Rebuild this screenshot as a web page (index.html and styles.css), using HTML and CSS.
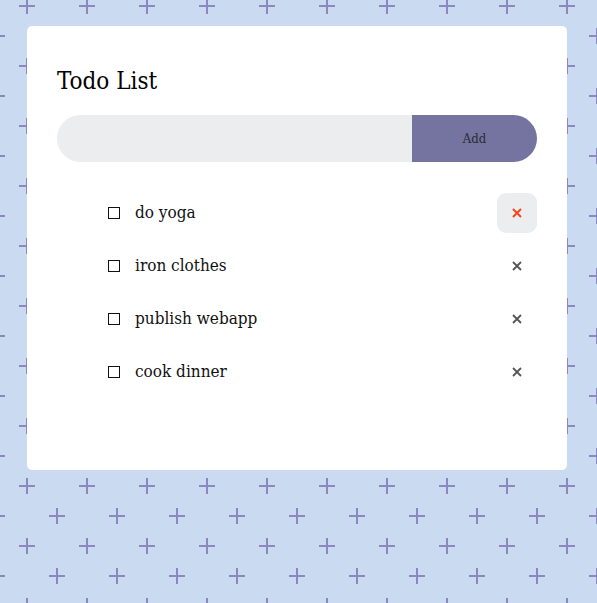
FILE: index.html
```html
<!DOCTYPE html>
<html lang="en">
<head>
<meta charset="utf-8">
<title>Todo List</title>
<link rel="stylesheet" href="styles.css">
</head>
<body>
<main class="card">
  <h1 class="title">Todo List</h1>
  <form class="add-form">
    <input class="add-input" type="text" aria-label="New todo">
    <button class="add-btn" type="button">Add</button>
  </form>
  <ul class="todo-list">
    <li class="todo">
      <span class="check"></span>
      <span class="todo-text">do yoga</span>
      <button class="del del-hover" type="button" aria-label="Delete"><svg viewBox="0 0 10 10" width="10" height="10"><path d="M1 1L9 9M9 1L1 9"/></svg></button>
    </li>
    <li class="todo">
      <span class="check"></span>
      <span class="todo-text">iron clothes</span>
      <button class="del" type="button" aria-label="Delete"><svg viewBox="0 0 10 10" width="10" height="10"><path d="M1 1L9 9M9 1L1 9"/></svg></button>
    </li>
    <li class="todo">
      <span class="check"></span>
      <span class="todo-text">publish webapp</span>
      <button class="del" type="button" aria-label="Delete"><svg viewBox="0 0 10 10" width="10" height="10"><path d="M1 1L9 9M9 1L1 9"/></svg></button>
    </li>
    <li class="todo">
      <span class="check"></span>
      <span class="todo-text">cook dinner</span>
      <button class="del" type="button" aria-label="Delete"><svg viewBox="0 0 10 10" width="10" height="10"><path d="M1 1L9 9M9 1L1 9"/></svg></button>
    </li>
  </ul>
</main>
</body>
</html>
```
FILE: styles.css
```css
html, body {
  margin: 0;
  padding: 0;
}
body {
  width: 597px;
  height: 603px;
  overflow: hidden;
  background-color: #c9daf1;
  background-image: url("data:image/svg+xml,%3Csvg xmlns='http://www.w3.org/2000/svg' width='60' height='60'%3E%3Cg fill='%238b88bf'%3E%3Crect x='7' y='14' width='16' height='2'/%3E%3Crect x='14' y='7' width='2' height='16'/%3E%3Crect x='37' y='44' width='16' height='2'/%3E%3Crect x='44' y='37' width='2' height='16'/%3E%3C/g%3E%3C/svg%3E");
  background-position: 12px -9px;
  font-family: "DejaVu Serif Condensed", "DejaVu Serif", "Liberation Serif", serif;
  color: #111;
}
.card {
  box-sizing: border-box;
  width: 540px;
  height: 444px;
  margin: 26px 0 0 27px;
  padding: 30px;
  background: #fff;
  border-radius: 5px;
  display: flex;
  flex-direction: column;
}
.title {
  margin: 10px 0 19px;
  font-size: 24px;
  line-height: 30px;
  font-weight: normal;
  color: #000;
}
.add-form {
  display: flex;
  height: 47px;
  border-radius: 24px;
  overflow: hidden;
  margin: 0;
}
.add-input {
  flex: 1;
  border: 0;
  margin: 0;
  padding: 0 20px;
  background: #ecedef;
  font: inherit;
  outline: none;
}
.add-btn {
  width: 125px;
  border: 0;
  margin: 0;
  background: #75739f;
  color: #2a2a38;
  font-family: inherit;
  font-size: 13px;
  padding: 0;
}
.todo-list {
  list-style: none;
  margin: 31px 0 0;
  padding: 0;
  display: flex;
  flex-direction: column;
  gap: 13px;
}
.todo {
  display: flex;
  align-items: center;
  height: 40px;
  padding-left: 51px;
}
.check {
  box-sizing: border-box;
  width: 12px;
  height: 12px;
  border: 1px solid #111;
  margin-right: 15px;
  margin-bottom: 1px;
}
.todo-text {
  flex: 1;
  font-size: 17px;
  line-height: 22px;
  padding-bottom: 2px;
  color: #111;
}
.del {
  width: 40px;
  height: 40px;
  border: 0;
  padding: 0;
  border-radius: 9px;
  background: transparent;
  display: flex;
  align-items: center;
  justify-content: center;
}
.del svg {
  stroke: #555;
  stroke-width: 1.8;
  fill: none;
}
.del-hover {
  background: #ecedef;
}
.del-hover svg {
  stroke: #f0441f;
  stroke-width: 2;
}
```
